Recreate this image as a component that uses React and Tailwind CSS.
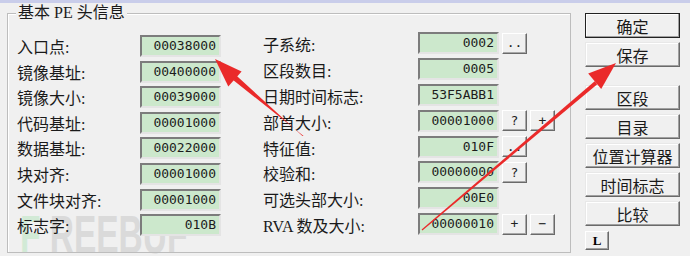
import React from "react";

const cjk = { fontFamily: '"Noto Sans CJK SC", "Liberation Sans", sans-serif' };
const label = { fontFamily: '"Liberation Serif", "Noto Sans CJK SC", serif' };
const mono = { fontFamily: '"DejaVu Sans Mono", "Liberation Mono", monospace' };

const leftRows = [
  ["入口点:", "00038000"],
  ["镜像基址:", "00400000"],
  ["镜像大小:", "00039000"],
  ["代码基址:", "00001000"],
  ["数据基址:", "00022000"],
  ["块对齐:", "00001000"],
  ["文件块对齐:", "00001000"],
  ["标志字:", "010B"],
];

const midRows = [
  ["子系统:", "0002", [".."]],
  ["区段数目:", "0005", []],
  ["日期时间标志:", "53F5ABB1", []],
  ["部首大小:", "00001000", ["?", "+"]],
  ["特征值:", "010F", [".."]],
  ["校验和:", "00000000", ["?"]],
  ["可选头部大小:", "00E0", []],
  ["RVA 数及大小:", "00000010", ["+", "−"]],
];

const sideButtons = ["确定", "保存", "区段", "目录", "位置计算器", "时间标志", "比较"];

function Field({ value }) {
  return (
    <div
      className="w-[81px] h-[22px] shrink-0 bg-[#cce8cc] border-2 border-t-[#7c7c7c] border-l-[#7c7c7c] border-r-[#e4e4e4] border-b-[#e4e4e4] text-right pr-[3px] text-[13px] leading-[18px] text-[#1c1c1c]"
      style={mono}
    >
      {value}
    </div>
  );
}

function SmallButton({ text }) {
  return (
    <div
      className="w-[25px] h-[21px] shrink-0 flex items-center justify-center bg-[#f0f0f0] border border-t-white border-l-white border-r-[#6a6a6a] border-b-[#6a6a6a] shadow-[inset_-1px_-1px_0_#a8a8a8] text-[13px] text-[#222]"
      style={mono}
    >
      {text}
    </div>
  );
}

function SideButton({ text, primary }) {
  return (
    <div
      className={
        "w-[95px] h-[25px] flex items-center justify-center bg-[#f0f0f0] text-[16px] text-[#1a1a1a] shadow-[inset_-1px_-1px_0_#a0a0a0,inset_1px_1px_0_#fff] " +
        (primary
          ? "border border-[#222]"
          : "border border-t-[#e8e8e8] border-l-[#e8e8e8] border-r-[#6a6a6a] border-b-[#6a6a6a]")
      }
      style={cjk}
    >
      {text}
    </div>
  );
}

export default function App() {
  return (
    <div className="relative w-[690px] h-[256px] overflow-hidden bg-[#f0f0f0] border-t-[3px] border-[#c9cdea]">
      {/* watermark, sits behind the dialog content */}
      <div
        className="absolute left-[20px] top-[204px] text-[54px] font-bold leading-none origin-left scale-x-[0.62] pointer-events-none select-none whitespace-nowrap"
        style={{ fontFamily: '"Liberation Sans", sans-serif' }}
      >
        <span className="text-[#d2ead6]">F</span>
        <span className="text-[#dadada]"> REEBUF</span>
      </div>

      <div className="relative flex pl-[7px] pt-[10px]">
        {/* group box */}
        <div className="relative w-[564px] h-[240px] border border-[#bdbdbd] shadow-[inset_1px_1px_0_#fff]">
          <div
            className="absolute -top-[11px] left-[8px] px-[2px] bg-[#f0f0f0] text-[16px] leading-[20px] text-[#1a1a1a]"
            style={label}
          >
            基本 PE 头信息
          </div>
          <div className="flex pl-[9px]">
            <div className="flex flex-col gap-[3.6px] pt-[21px]">
              {leftRows.map(([l, v]) => (
                <div key={l} className="flex items-center h-[22px]">
                  <div className="w-[123px] text-[16px] pt-[4px] text-[#1a1a1a]" style={label}>
                    {l}
                  </div>
                  <Field value={v} />
                </div>
              ))}
            </div>
            <div className="flex flex-col gap-[3.9px] pt-[18px] ml-[42px]">
              {midRows.map(([l, v, btns]) => (
                <div key={l} className="flex items-center h-[22px]">
                  <div className="w-[155px] text-[16px] pt-[6px] text-[#1a1a1a]" style={label}>
                    {l}
                  </div>
                  <Field value={v} />
                  <div className="flex gap-[3px] ml-[3px]">
                    {btns.map((b, i) => (
                      <SmallButton key={i} text={b} />
                    ))}
                  </div>
                </div>
              ))}
            </div>
          </div>
        </div>

        {/* side buttons */}
        <div className="flex flex-col ml-[14px]">
          <SideButton text={sideButtons[0]} primary />
          <div className="mt-[4px]">
            <SideButton text={sideButtons[1]} />
          </div>
          <div className="flex flex-col gap-[4px] mt-[18px]">
            {sideButtons.slice(2).map((t) => (
              <SideButton key={t} text={t} />
            ))}
          </div>
          <div
            className="mt-[5px] w-[24px] h-[19px] flex items-center justify-center bg-[#f0f0f0] border border-t-white border-l-white border-r-[#6a6a6a] border-b-[#6a6a6a] shadow-[inset_-1px_-1px_0_#a0a0a0] text-[13px] font-bold"
            style={label}
          >
            L
          </div>
        </div>
      </div>

      {/* red annotation arrows */}
      <svg className="absolute inset-0 pointer-events-none" width="690" height="256" viewBox="0 0 690 256">
        <polygon points="303.6,133.1 302.4,132.9 236.6,72.8 233.4,77.2" fill="#ea2a2a" />
        <polygon points="215,56 241.6,68.5 228.3,83.5" fill="#ea2a2a" />
        <polygon points="421.6,226.6 422.4,227.4 597.3,81.2 594.7,78.2" fill="#ea2a2a" />
        <polygon points="616,60 601.2,86 588.2,70.6" fill="#ea2a2a" />
      </svg>
    </div>
  );
}
